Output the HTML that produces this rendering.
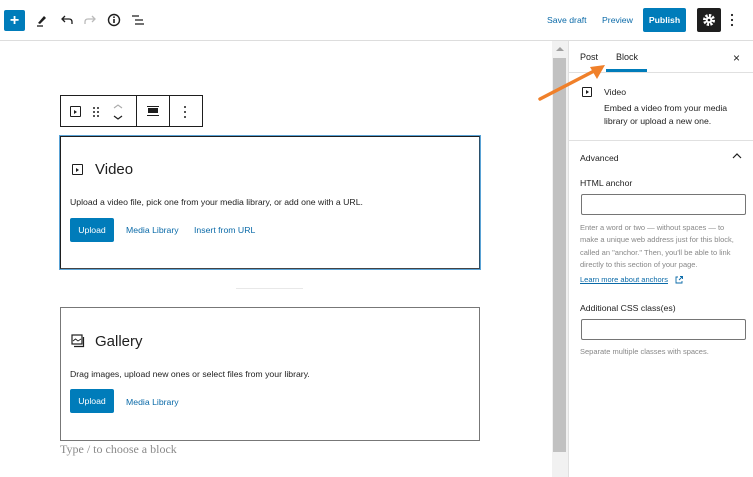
<!DOCTYPE html>
<html><head><style>
*{box-sizing:border-box;margin:0;padding:0}
body{width:753px;height:477px;overflow:hidden;background:#fff;font-family:"Liberation Sans",sans-serif;color:#1e1e1e;position:relative}
.a{position:absolute}
.t{font-size:8.7px;white-space:nowrap}
.btn{background:#007cba;color:#fff;border-radius:2px;font-size:8.7px;display:flex;align-items:center;justify-content:center}
.link{color:#0a6aa8;font-size:8.7px}
.inp{border:1px solid #757575;border-radius:2px;background:#fff}
.help{color:#888;font-size:7.5px;line-height:12.3px}
</style></head><body>
<div class="a" style="left:0;top:40px;width:753px;height:1px;background:#ddd"></div>
<div class="a btn" style="left:4px;top:10px;width:21px;height:21px;font-size:16px;font-weight:bold">+</div>
<svg class="a" style="left:34px;top:12px" width="16" height="16" viewBox="0 0 16 16"><path d="M4 11 L10 4 L12 6 L6 12 Z" fill="#1e1e1e"/><path d="M3 14 H9" stroke="#1e1e1e" stroke-width="1.3"/></svg>
<svg class="a" style="left:59px;top:12px" width="16" height="16" viewBox="0 0 16 16"><path d="M4 7 H10 Q13 7 13 10 V12 M6 4 L3 7 L6 10" stroke="#1e1e1e" stroke-width="1.3" fill="none"/></svg>
<svg class="a" style="left:82px;top:12px" width="16" height="16" viewBox="0 0 16 16"><path d="M12 7 H6 Q3 7 3 10 V12 M10 4 L13 7 L10 10" stroke="#bbb" stroke-width="1.3" fill="none"/></svg>
<svg class="a" style="left:106px;top:12px" width="16" height="16" viewBox="0 0 16 16"><circle cx="8" cy="8" r="5.5" stroke="#1e1e1e" stroke-width="1.4" fill="none"/><path d="M8 7 V11" stroke="#1e1e1e" stroke-width="1.6"/><circle cx="8" cy="5.2" r="0.9" fill="#1e1e1e"/></svg>
<svg class="a" style="left:130px;top:12px" width="16" height="16" viewBox="0 0 16 16"><path d="M2 4 H9 M5 8 H13 M5 12 H14" stroke="#1e1e1e" stroke-width="1.3"/></svg>
<div class="a t" style="left:547px;top:15px;color:#0a6aa8">Save draft</div>
<div class="a t" style="left:602px;top:15px;color:#0a6aa8">Preview</div>
<div class="a btn" style="left:643px;top:8px;width:43px;height:24px;font-weight:bold">Publish</div>
<div class="a" style="left:697px;top:8px;width:24px;height:24px;background:#1e1e1e;border-radius:2px"></div>
<svg class="a" style="left:701px;top:12px" width="16" height="16" viewBox="0 0 16 16"><circle cx="8" cy="8" r="4.5" fill="none" stroke="#fff" stroke-width="3" stroke-dasharray="2.2 1.3"/><circle cx="8" cy="8" r="3.3" fill="#fff"/><circle cx="8" cy="8" r="1.3" fill="#1e1e1e"/></svg>
<svg class="a" style="left:728px;top:12px" width="8" height="16"><circle cx="4" cy="3" r="1.1" fill="#1e1e1e"/><circle cx="4" cy="8" r="1.1" fill="#1e1e1e"/><circle cx="4" cy="13" r="1.1" fill="#1e1e1e"/></svg>

<div class="a" style="left:60px;top:95px;width:143px;height:32px;border:1px solid #1e1e1e;background:#fff"></div>
<div class="a" style="left:136px;top:95px;width:1px;height:32px;background:#1e1e1e"></div>
<div class="a" style="left:169px;top:95px;width:1px;height:32px;background:#1e1e1e"></div>
<div class="a" style="left:70px;top:106px;width:11px;height:11px;border:1.3px solid #1e1e1e;border-radius:1px"></div>
<div class="a" style="left:74px;top:109.5px;width:0;height:0;border-left:3.5px solid #1e1e1e;border-top:2px solid transparent;border-bottom:2px solid transparent"></div>
<svg class="a" style="left:92px;top:106px" width="8" height="12"><g fill="#1e1e1e"><circle cx="2" cy="2" r="1"/><circle cx="6" cy="2" r="1"/><circle cx="2" cy="6" r="1"/><circle cx="6" cy="6" r="1"/><circle cx="2" cy="10" r="1"/><circle cx="6" cy="10" r="1"/></g></svg>
<svg class="a" style="left:112px;top:103px" width="12" height="18"><path d="M2 5 L6 2 L10 5" stroke="#aaa" fill="none" stroke-width="1.1"/><path d="M2 13 L6 16 L10 13" stroke="#1e1e1e" fill="none" stroke-width="1.2"/></svg>
<div class="a" style="left:148px;top:108px;width:10px;height:5px;background:#1e1e1e"></div>
<div class="a" style="left:147px;top:106px;width:12px;height:1px;background:#1e1e1e"></div>
<div class="a" style="left:147px;top:115px;width:12px;height:1px;background:#1e1e1e"></div>
<svg class="a" style="left:182px;top:105px" width="6" height="14"><circle cx="3" cy="2" r="1" fill="#1e1e1e"/><circle cx="3" cy="7" r="1" fill="#1e1e1e"/><circle cx="3" cy="12" r="1" fill="#1e1e1e"/></svg>

<div class="a" style="left:59px;top:135px;width:422px;height:135px;border:1px solid #5aa3d6"></div>
<div class="a" style="left:60px;top:136px;width:420px;height:133px;border:1px solid #1e1e1e;border-color:#1e1e1e #2a4f6a #444 #1e1e1e"></div>
<div class="a" style="left:72px;top:164px;width:11px;height:11px;border:1.2px solid #1e1e1e;border-radius:1px"></div>
<div class="a" style="left:76px;top:167.5px;width:0;height:0;border-left:3.5px solid #1e1e1e;border-top:2px solid transparent;border-bottom:2px solid transparent"></div>
<div class="a" style="left:95px;top:161px;font-size:15px">Video</div>
<div class="a t" style="left:70px;top:197px">Upload a video file, pick one from your media library, or add one with a URL.</div>
<div class="a btn" style="left:70px;top:218px;width:44px;height:24px">Upload</div>
<div class="a link" style="left:126px;top:225px">Media Library</div>
<div class="a link" style="left:194px;top:225px">Insert from URL</div>
<div class="a" style="left:236px;top:288px;width:67px;height:1px;background:#e8e8e8"></div>

<div class="a" style="left:60px;top:307px;width:420px;height:134px;border:1px solid #777"></div>
<svg class="a" style="left:71px;top:334px" width="14" height="14" viewBox="0 0 14 14"><rect x="1" y="1" width="10" height="9" fill="none" stroke="#1e1e1e" stroke-width="1.2"/><path d="M2 7 L4.5 5 L7 7 L10 5" stroke="#1e1e1e" fill="none" stroke-width="0.9"/><path d="M3 12.5 H12.5 V3" stroke="#1e1e1e" fill="none" stroke-width="1.2"/></svg>
<div class="a" style="left:95px;top:333px;font-size:15px">Gallery</div>
<div class="a t" style="left:70px;top:369px">Drag images, upload new ones or select files from your library.</div>
<div class="a btn" style="left:70px;top:389px;width:44px;height:24px">Upload</div>
<div class="a link" style="left:126px;top:397px">Media Library</div>
<div class="a" style="left:60px;top:442px;font-family:'Liberation Serif',serif;font-size:12px;color:#8a8a8a">Type / to choose a block</div>

<div class="a" style="left:552px;top:41px;width:16px;height:436px;background:#f1f1f1"></div>
<div class="a" style="left:556px;top:47px;width:0;height:0;border-bottom:4px solid #a0a0a0;border-left:4px solid transparent;border-right:4px solid transparent"></div>
<div class="a" style="left:553px;top:58px;width:13px;height:394px;background:#c1c1c1"></div>

<div class="a" style="left:568px;top:41px;width:1px;height:436px;background:#e0e0e0"></div>
<div class="a t" style="left:580px;top:52px;font-size:9px">Post</div>
<div class="a t" style="left:616px;top:52px;font-size:9px">Block</div>
<div class="a" style="left:606px;top:69px;width:41px;height:3px;background:#007cba"></div>
<div class="a" style="left:569px;top:72px;width:184px;height:1px;background:#e0e0e0"></div>
<div class="a" style="left:733px;top:51px;font-size:12px">×</div>
<div class="a" style="left:582px;top:87px;width:10px;height:10px;border:1.2px solid #1e1e1e;border-radius:1px"></div>
<div class="a" style="left:586px;top:90px;width:0;height:0;border-left:3px solid #1e1e1e;border-top:2px solid transparent;border-bottom:2px solid transparent"></div>
<div class="a t" style="left:604px;top:87px">Video</div>
<div class="a" style="left:604px;top:102px;font-size:8.7px;line-height:12.5px;color:#1e1e1e">Embed a video from your media<br>library or upload a new one.</div>
<div class="a" style="left:569px;top:140px;width:184px;height:1px;background:#e0e0e0"></div>
<div class="a t" style="left:580px;top:153px">Advanced</div>
<svg class="a" style="left:732px;top:152px" width="10" height="8"><path d="M1 6 L5 2 L9 6" stroke="#1e1e1e" fill="none" stroke-width="1.2"/></svg>
<div class="a t" style="left:580px;top:178px">HTML anchor</div>
<div class="a inp" style="left:581px;top:194px;width:165px;height:21px"></div>
<div class="a help" style="left:580px;top:222px">Enter a word or two — without spaces — to<br>make a unique web address just for this block,<br>called an "anchor." Then, you'll be able to link<br>directly to this section of your page.</div>
<div class="a" style="left:580px;top:275px;font-size:7.5px;color:#0a6aa8;text-decoration:underline">Learn more about anchors</div>
<svg class="a" style="left:674px;top:275px" width="10" height="10"><path d="M4 2 H2 V8 H8 V6 M5 5 L8.5 1.5 M6 1.5 H8.5 V4" stroke="#0a6aa8" fill="none" stroke-width="0.9"/></svg>
<div class="a t" style="left:580px;top:303px">Additional CSS class(es)</div>
<div class="a inp" style="left:581px;top:319px;width:165px;height:21px"></div>
<div class="a help" style="left:580px;top:346px">Separate multiple classes with spaces.</div>

<svg class="a" style="left:530px;top:55px" width="85" height="55"><path d="M10 44 L66 15" stroke="#f0802a" stroke-width="3.5" stroke-linecap="round"/><path d="M75 10 L60 12 L67 24 Z" fill="#f0802a"/></svg>
</body></html>
